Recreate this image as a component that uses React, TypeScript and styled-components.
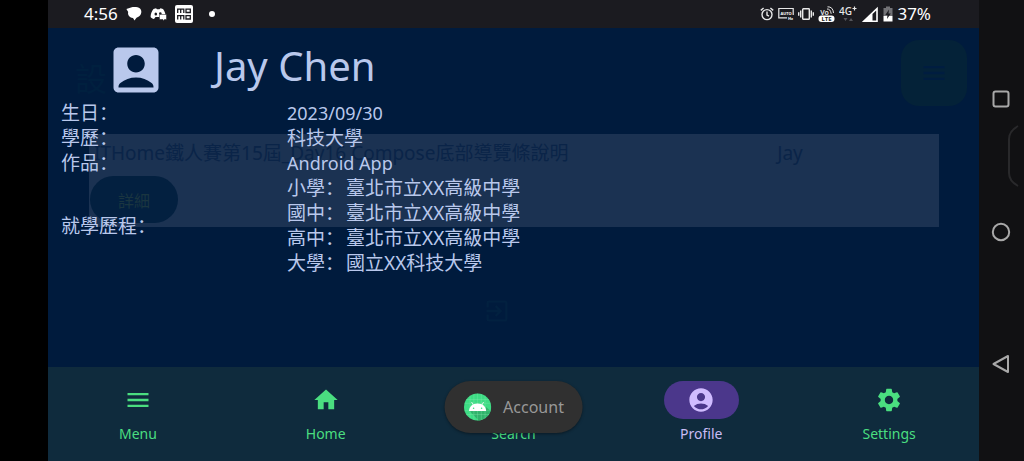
import React from "react";
import styled, { createGlobalStyle } from "styled-components";
import {
  MdAccountBox,
  MdAccountCircle,
  MdExitToApp,
  MdHome,
  MdMenu,
  MdSearch,
  MdSettings,
} from "react-icons/md";

const GlobalStyle = createGlobalStyle`
  * { box-sizing: border-box; }
  body {
    margin: 0;
    background: #000;
    font-family: "Noto Sans", "Noto Sans CJK TC", sans-serif;
  }
  button { font-family: inherit; border: 0; padding: 0; cursor: pointer; }
`;

const Device = styled.div`
  display: grid;
  grid-template-columns: 48px minmax(0, 1fr) 45px;
  min-height: 100vh;
  background: #000;
`;

const Screen = styled.div`
  grid-column: 2;
  position: relative;
  display: flex;
  flex-direction: column;
  background: #001b3d;
`;

/* Status bar */

const StatusBar = styled.header`
  display: flex;
  align-items: center;
  justify-content: space-between;
  height: 28px;
  padding: 0 48px 0 36px;
  background: #1b1b20;
  color: #fff;
`;

const StatusGroup = styled.div<{ $gap: number }>`
  display: flex;
  align-items: center;
  gap: ${(p) => p.$gap}px;

  svg { display: block; }
`;

const StatusText = styled.span`
  font-size: 17px;
  line-height: 28px;
`;

const MoreDot = styled.span`
  width: 6px;
  height: 6px;
  margin-left: 8px;
  border-radius: 50%;
  background: #fff;
`;

/* Page body */

const Body = styled.main`
  position: relative;
  flex: 1;
  color: #b9c8ec;
`;

const Foreground = styled.div`
  position: relative;
  padding: 11px 13px 24px;
`;

const ProfileHeader = styled.div`
  display: flex;
  align-items: center;
  gap: 48px;
  height: 62px;
  padding-left: 45px;
`;

const Name = styled.h1`
  margin: 0;
  padding-bottom: 8px;
  font-size: 40px;
  font-weight: 400;
  line-height: 48px;
`;

const Details = styled.dl`
  display: grid;
  grid-template-columns: 226px minmax(0, 1fr);
  align-items: center;
  margin: 0;
  font-size: 19px;
  line-height: 25px;
`;

const Term = styled.dt``;

const Value = styled.dd<{ $latin?: boolean }>`
  margin: 0;
  font-size: ${(p) => (p.$latin ? 18 : 19)}px;
`;

const SchoolList = styled.ul`
  margin: 0;
  padding: 0;
  list-style: none;
`;

const ColonMark = styled.span`
  margin-right: 2px;
  font-family: "Noto Sans CJK SC", sans-serif;
  line-height: 0;
`;

/* Page fading out behind the profile */

const FadingPage = styled.div`
  position: absolute;
  inset: 0;
  display: flex;
  flex-direction: column;
  overflow: hidden;
  color: #0a2448;
`;

const FadingTop = styled.div`
  display: flex;
  align-items: center;
  justify-content: space-between;
  height: 106px;
  padding: 0 12px 16px 27px;
`;

const FadingTitle = styled.span`
  padding-top: 12px;
  font-size: 32px;
  line-height: 40px;
  color: #00203f;
`;

const FadingFab = styled.button`
  display: grid;
  place-items: center;
  width: 66px;
  height: 66px;
  border-radius: 18px;
  background: #042238;
  color: #001d40;
`;

const FadingCard = styled.section`
  display: grid;
  grid-template-columns: minmax(0, 680fr) minmax(0, 161fr);
  align-content: space-between;
  height: 93px;
  margin: 0 40px 0 41px;
  padding: 7px 0 4px 5px;
  background: #1b3252;
  font-size: 19px;
  line-height: 25px;
`;

const FadingButton = styled.button`
  width: 88px;
  height: 47px;
  margin-left: -4px;
  border-radius: 24px;
  background: #032040;
  color: #1a3540;
  font-size: 16px;
`;

const FadingExit = styled.div`
  display: flex;
  justify-content: center;
  padding-top: 70px;
  padding-right: 34px;
  color: #022140;
`;

/* Bottom navigation */

const NavBar = styled.nav`
  display: grid;
  grid-template-columns: repeat(5, minmax(0, 1fr));
  gap: 8px;
  height: 94px;
  padding-top: 14px;
  background: #0f2b3d;
`;

const NavItem = styled.button<{ $active?: boolean }>`
  display: flex;
  flex-direction: column;
  align-items: center;
  gap: 5px;
  background: none;
  color: ${(p) => (p.$active ? "#c9bcf5" : "#4ade80")};
  font-size: 14px;
  line-height: 20px;
`;

const NavPill = styled.span<{ $active?: boolean }>`
  display: grid;
  place-items: center;
  width: 75px;
  height: 38px;
  border-radius: 19px;
  background: ${(p) => (p.$active ? "#4b378b" : "transparent")};
  color: ${(p) => (p.$active ? "#d0bcff" : "inherit")};
`;

const Toast = styled.div`
  position: absolute;
  left: 50%;
  bottom: 28px;
  transform: translateX(-50%);
  display: flex;
  align-items: center;
  gap: 12px;
  height: 52px;
  padding: 0 19px;
  border-radius: 26px;
  background: #303030;
  box-shadow: 0 1px 3px rgba(0, 0, 0, 0.4);
  color: #989898;
  font-size: 16px;
  line-height: 24px;
`;

/* System keys */

const SystemKeys = styled.aside`
  position: relative;
  display: flex;
  flex-direction: column;
  align-items: center;
  justify-content: space-between;
  padding: 89px 2px 87px 0;
  background: #111113;
`;

const SystemKey = styled.button`
  display: grid;
  place-items: center;
  width: 20px;
  height: 20px;
  background: none;
  color: #a8a8a8;
`;

const EdgeHandle = styled.svg`
  position: absolute;
  top: 124px;
  right: 5px;
`;

const Colon = () => <ColonMark>：</ColonMark>;

const ChatIcon = () => (
  <svg width="16" height="16" viewBox="0 0 16 16" fill="#fff">
    <path d="M5 1.500C8 .8 12 1 14 2.600C16 4.500 15.600 8 14 9.500C12.500 11 11 11.500 10.500 11.800L8.500 14.500L7 12C3 11.500 1.500 8.500 2.200 6L.4 3Z" />
  </svg>
);

const GamepadChatIcon = () => (
  <svg width="17" height="16" viewBox="0 0 17 16">
    <path
      fill="#fff"
      d="M3.500 3L6 2.200L7 3.200H9.500L10.500 2.200L13 3C14.500 5 15.300 7 15.500 9H10V12L9 11H5.500L4 13C2.500 12.800 1.300 12 .6 11C.6 8 1.700 5 3.500 3Z"
    />
    <ellipse cx="5.800" cy="8" rx="1.300" ry="1.500" fill="#1b1b20" />
    <ellipse cx="10.300" cy="7.500" rx="1.300" ry="1.300" fill="#1b1b20" />
    <path fill="#fff" stroke="#1b1b20" strokeWidth=".5" d="M9.500 8.500H16.500V13.500H14.500L13 15V13.500H9.500Z" />
  </svg>
);

const ShopIcon = () => (
  <svg width="18" height="18" viewBox="0 0 18 18">
    <rect width="18" height="18" rx="2" fill="#fff" />
    <g fill="none" stroke="#1b1b20" strokeWidth="1.300">
      <path d="M2.700 8V4.200H8.800V8M5.700 4.200V8M11 4.200H15.300V7.500H11ZM2.700 14.500V10.700H8.800V14.500M5.700 10.700V14.500M11 10.700H15.300V14H11Z" />
    </g>
  </svg>
);

const AlarmIcon = () => (
  <svg width="14" height="14" viewBox="0 0 14 14" fill="none" stroke="#e8e8e8" strokeWidth="1.400">
    <circle cx="7" cy="7.600" r="5" />
    <path d="M7 4.500V8L9 9.200M.8 3.400L3.600 1M13.200 3.400L10.400 1" />
  </svg>
);

const RefreshRateIcon = () => (
  <svg width="16" height="14" viewBox="0 0 16 14">
    <path d="M9 10.800H.8V1.500H15.200V8" fill="none" stroke="#e8e8e8" strokeWidth="1.200" />
    <text x="8" y="7.800" fontSize="4" fontWeight="700" textAnchor="middle" fill="#fff">AUTO</text>
    <text x="12.500" y="13" fontSize="4" fontWeight="700" textAnchor="middle" fill="#fff">Hz</text>
  </svg>
);

const VibrateIcon = () => (
  <svg width="16" height="14" viewBox="0 0 16 14" fill="none" stroke="#e8e8e8" strokeWidth="1.400">
    <rect x="4.700" y="1.700" width="6.600" height="10.600" rx=".6" />
    <path d="M2.700 3.500V10.500M.7 5.200V8.800M13.300 3.500V10.500M15.300 5.200V8.800" />
  </svg>
);

const VolteIcon = () => (
  <svg width="17" height="18" viewBox="0 0 17 18">
    <text x="6.500" y="9.500" fontSize="7" fontWeight="600" textAnchor="middle" fill="#e8e8e8">Vo</text>
    <path d="M9 4Q12.500 3.800 13.200 8.800M9.500 1.800Q15 1.600 15.500 8" fill="none" stroke="#e8e8e8" />
    <rect x=".5" y="10.500" width="16" height="6.500" rx="3" fill="#fff" />
    <text x="8.500" y="15.800" fontSize="6" fontWeight="700" textAnchor="middle" fill="#1b1b20">LTE</text>
  </svg>
);

const NetworkIcon = () => (
  <svg width="18" height="20" viewBox="0 0 18 20">
    <text x="0" y="11" fontSize="10" fontWeight="500" fill="#e8e8e8">4G</text>
    <path d="M13.500 4.500H17.500M15.500 2.500V6.500" stroke="#e8e8e8" strokeWidth="1.200" />
    <path d="M4.500 14H8.500L6.500 17ZM10 17H14L12 14Z" fill="#55555a" />
  </svg>
);

const SignalIcon = () => (
  <svg width="18" height="17" viewBox="0 0 18 17">
    <path d="M.8 16L16.800 .8V16Z" fill="#fff" />
    <path d="M11.500 8L15.200 4.500V14.500H11.500Z" fill="#1b1b20" />
  </svg>
);

const BatteryIcon = () => (
  <svg width="10" height="16" viewBox="0 0 10 16">
    <path d="M.5 2H3V.5H7V2H9.500V10H.5Z" fill="#727276" />
    <path d="M.5 10H9.500V15.500H.5Z" fill="#fff" />
    <path d="M6 3.500L2.300 9H4.500L4 13L7.800 7.500H5.500Z" fill="#1b1b20" />
  </svg>
);

const AndroidBadge = () => (
  <svg width="28" height="28" viewBox="0 0 28 28">
    <circle cx="14" cy="14" r="13.600" fill="#3ddc84" />
    <path d="M6 18L15 27.500C20 27 25 23 27 18L22.500 14L22 18Z" fill="#30b36b" />
    <path
      d="M6.500 2.500V25.500M10.300 1V27M14 .5V27.500M17.700 1V27M21.500 2.500V25.500M2.500 6.500H25.500M1 10.300H27M1 17.700H27M2.500 21.500H25.500"
      stroke="#8aebb5"
      strokeWidth=".3"
    />
    <path d="M5.500 18C5.500 13.500 9 10.500 14 10.500S22.500 13.500 22.500 18Z" fill="#fff" />
    <path d="M9.700 12L8 9M18.300 12L20 9" stroke="#fff" strokeWidth=".8" />
    <circle cx="10" cy="15.200" r=".8" fill="#3ddc84" />
    <circle cx="18" cy="15.200" r=".8" fill="#3ddc84" />
  </svg>
);

const schools = [
  ["小學", "臺北市立XX高級中學"],
  ["國中", "臺北市立XX高級中學"],
  ["高中", "臺北市立XX高級中學"],
  ["大學", "國立XX科技大學"],
];

const tabs = [
  { label: "Menu", Icon: MdMenu },
  { label: "Home", Icon: MdHome },
  { label: "Search", Icon: MdSearch },
  { label: "Profile", Icon: MdAccountCircle, active: true },
  { label: "Settings", Icon: MdSettings },
];

export default function App() {
  return (
    <>
      <GlobalStyle />
      <Device>
        <Screen>
          <StatusBar>
            <StatusGroup $gap={8}>
              <StatusText>4:56</StatusText>
              <ChatIcon />
              <GamepadChatIcon />
              <ShopIcon />
              <MoreDot />
            </StatusGroup>
            <StatusGroup $gap={4}>
              <AlarmIcon />
              <RefreshRateIcon />
              <VibrateIcon />
              <VolteIcon />
              <NetworkIcon />
              <SignalIcon />
              <BatteryIcon />
              <StatusText>37%</StatusText>
            </StatusGroup>
          </StatusBar>

          <Body>
            <FadingPage aria-hidden="true">
              <FadingTop>
                <FadingTitle>設</FadingTitle>
                <FadingFab tabIndex={-1}>
                  <MdMenu size={28} />
                </FadingFab>
              </FadingTop>
              <FadingCard>
                <span>ITHome鐵人賽第15屆_Day16 Compose底部導覽條說明</span>
                <span>Jay</span>
                <FadingButton tabIndex={-1}>詳細</FadingButton>
              </FadingCard>
              <FadingExit>
                <MdExitToApp size={28} />
              </FadingExit>
            </FadingPage>

            <Foreground>
              <ProfileHeader>
                <MdAccountBox size={60} />
                <Name>Jay Chen</Name>
              </ProfileHeader>
              <Details>
                <Term>生日<Colon /></Term>
                <Value $latin>2023/09/30</Value>
                <Term>學歷<Colon /></Term>
                <Value>科技大學</Value>
                <Term>作品<Colon /></Term>
                <Value $latin>Android App</Value>
                <Term>就學歷程<Colon /></Term>
                <Value>
                  <SchoolList>
                    {schools.map(([level, school]) => (
                      <li key={level}>
                        {level}
                        <Colon />
                        {school}
                      </li>
                    ))}
                  </SchoolList>
                </Value>
              </Details>
            </Foreground>
          </Body>

          <NavBar>
            {tabs.map(({ label, Icon, active }) => (
              <NavItem key={label} $active={active} aria-current={active ? "page" : undefined}>
                <NavPill $active={active}>
                  <Icon size={28} />
                </NavPill>
                {label}
              </NavItem>
            ))}
          </NavBar>

          <Toast role="status">
            <AndroidBadge />
            Account
          </Toast>
        </Screen>

        <SystemKeys>
          <EdgeHandle width="12" height="64" viewBox="0 0 12 64" fill="none" stroke="#29292b" strokeWidth="2">
            <path d="M11 2Q2 7 2 15V49Q2 57 11 62" />
          </EdgeHandle>
          <SystemKey aria-label="Recent apps">
            <svg width="20" height="20" viewBox="0 0 20 20" fill="none" stroke="currentColor" strokeWidth="2">
              <rect x="2.500" y="2.500" width="15" height="15" rx="2" />
            </svg>
          </SystemKey>
          <SystemKey aria-label="Home">
            <svg width="20" height="20" viewBox="0 0 20 20" fill="none" stroke="currentColor" strokeWidth="2">
              <circle cx="10" cy="10" r="8.200" />
            </svg>
          </SystemKey>
          <SystemKey aria-label="Back">
            <svg width="20" height="20" viewBox="0 0 20 20" fill="none" stroke="currentColor" strokeWidth="2" strokeLinejoin="round">
              <path d="M17 2V18L2.500 10Z" />
            </svg>
          </SystemKey>
        </SystemKeys>
      </Device>
    </>
  );
}
